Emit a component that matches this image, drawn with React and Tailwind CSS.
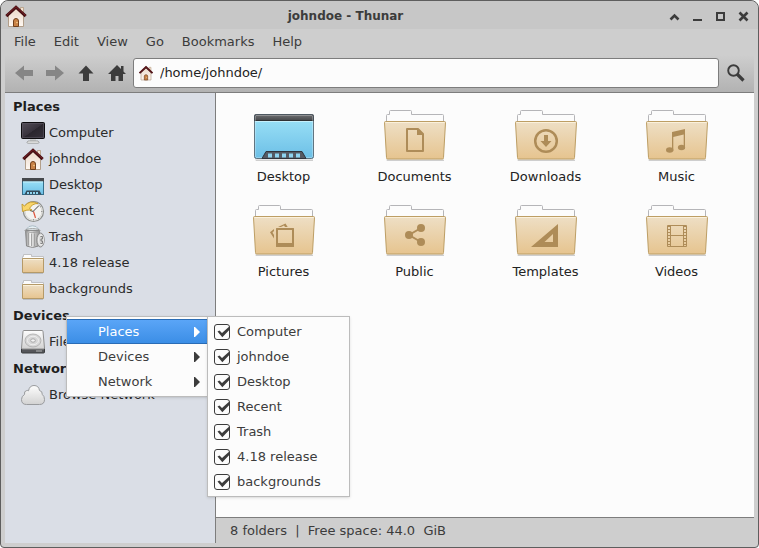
import { useState } from "react";

const MENUS = ["File", "Edit", "View", "Go", "Bookmarks", "Help"];

const PLACES = [
  { name: "Computer", Icon: ComputerIcon },
  { name: "johndoe", Icon: HouseIcon },
  { name: "Desktop", Icon: SmallDesktopIcon },
  { name: "Recent", Icon: RecentIcon },
  { name: "Trash", Icon: TrashIcon },
  { name: "4.18 release", Icon: SmallFolderIcon },
  { name: "backgrounds", Icon: SmallFolderIcon },
];

const SECTIONS = [
  { title: "Places", items: PLACES },
  { title: "Devices", items: [{ name: "File System", Icon: DriveIcon }] },
  { title: "Network", items: [{ name: "Browse Network", Icon: CloudIcon }] },
];

const FOLDERS = [
  "Desktop",
  "Documents",
  "Downloads",
  "Music",
  "Pictures",
  "Public",
  "Templates",
  "Videos",
];

export default function App() {
  return (
    <div className="relative flex min-h-screen flex-col rounded-t-lg rounded-b border border-[#5e5e5e] bg-[#cecece] font-['DejaVu_Sans',sans-serif] text-[13px] leading-4 text-[#3c3c3c]">
      <Gradients />
      <TitleBar />
      <div className="mx-1 mb-1 flex flex-1 flex-col">
        <nav className="flex h-[26px] items-center gap-[18px] px-[9px]">
          {MENUS.map((m) => (
            <button key={m}>{m}</button>
          ))}
        </nav>
        <Toolbar />
        <div className="flex flex-1">
          <Sidebar />
          <main className="flex flex-1 flex-col">
            <FileView />
            <footer className="flex h-[26px] items-center border-t border-[#7d7d7d] px-[14px] whitespace-pre">
              8 folders  |  Free space: 44.0  GiB
            </footer>
          </main>
        </div>
      </div>
      <ContextMenu />
    </div>
  );
}

function TitleBar() {
  return (
    <header className="flex h-7 items-center rounded-t-lg bg-[#c7c7c7] pt-0.5 pr-[3px] pl-[3px]">
      <HouseIcon className="size-6" />
      <h1 className="flex-1 text-center text-[12px] font-bold">johndoe - Thunar</h1>
      <button aria-label="Roll up" className="grid w-[23px] place-items-center">
        <svg viewBox="0 0 11 11" className="size-[11px]">
          <path d="M1.500 8.500 5.500 4.500 9.500 8.500" fill="none" stroke="#3c3c3c" strokeWidth="2.600" />
        </svg>
      </button>
      <button aria-label="Minimize" className="grid w-[23px] place-items-center">
        <svg viewBox="0 0 11 11" className="size-[11px]">
          <path d="M1 8h9v2H1z" fill="#3c3c3c" />
        </svg>
      </button>
      <button aria-label="Maximize" className="grid w-[23px] place-items-center">
        <svg viewBox="0 0 11 11" className="size-[11px]">
          <path d="M2 2h7v7H2z" fill="none" stroke="#3c3c3c" strokeWidth="2" />
        </svg>
      </button>
      <button aria-label="Close" className="grid w-[23px] place-items-center">
        <svg viewBox="0 0 11 11" className="size-[11px]">
          <path d="M1.500 1.500 9.500 9.500M9.500 1.500 1.500 9.500" stroke="#3c3c3c" strokeWidth="2.600" />
        </svg>
      </button>
    </header>
  );
}

function Toolbar() {
  const [path, setPath] = useState("/home/johndoe/");

  return (
    <div className="flex h-[38px] items-center border-b border-[#7d7d7d] bg-linear-to-b from-[#cecece] to-[#b2b2b2] px-[3px] pb-0.5">
      <ToolButton label="Back" color="#868686">
        <path d="M0 9 9 1.500V6h9v6H9v4.500z" />
      </ToolButton>
      <ToolButton label="Forward" color="#868686">
        <path d="M18 9 9 1.500V6H0v6h9v4.500z" />
      </ToolButton>
      <ToolButton label="Up" color="#3c3c3c">
        <path d="M9 1.500 1.500 9.500H6V17h6V9.500h4.500z" />
      </ToolButton>
      <ToolButton label="Home" color="#3c3c3c">
        <path d="M9 1 0 10h3v7h4.500v-5h3v5H15v-7h3l-2.500-2.500V2H13v3z" />
      </ToolButton>
      <label className="mx-px flex h-[30px] flex-1 items-center gap-1.5 rounded-[3px] border border-[#7d7d7d] bg-[#fcfcfc] pl-1">
        <HouseIcon className="size-4" />
        <input
          aria-label="Location"
          value={path}
          onChange={(e) => setPath(e.target.value)}
          className="min-w-0 flex-1 bg-transparent text-[#232323] outline-none"
        />
      </label>
      <ToolButton label="Search" color="#3c3c3c">
        <circle cx="6.500" cy="6.500" r="5.300" fill="none" stroke="#3c3c3c" strokeWidth="1.900" />
        <path d="M10 10 16.500 16.500" stroke="#3c3c3c" strokeWidth="3.200" />
      </ToolButton>
    </div>
  );
}

function ToolButton({ label, color, children }) {
  return (
    <button aria-label={label} className="grid h-[30px] w-[31px] place-items-center">
      <svg viewBox="0 0 18 18" fill={color} className="size-[18px]">
        {children}
      </svg>
    </button>
  );
}

function Sidebar() {
  return (
    <aside className="flex w-[211px] flex-col gap-px border-r border-[#7d7d7d] bg-[#dadee6] pt-px text-[#2b2b2b]">
      {SECTIONS.map((s) => (
        <section key={s.title}>
          <h2 className="flex h-[26px] items-center pl-2 font-bold text-[#1e1e1e]">
            {s.title}
          </h2>
          <ul>
            {s.items.map(({ name, Icon }) => (
              <li key={name}>
                <button className="flex h-[26px] w-full items-center gap-1 pl-4">
                  <Icon className="size-6" />
                  {name}
                </button>
              </li>
            ))}
          </ul>
        </section>
      ))}
    </aside>
  );
}

function FileView() {
  return (
    <div className="grid flex-1 grid-cols-[repeat(auto-fill,131px)] content-start gap-y-[14px] bg-[#fcfcfc] pt-[11px] pl-[2px] text-[#232323]">
      {FOLDERS.map((name) => (
        <button key={name} className="flex flex-col items-center gap-px">
          {name === "Desktop" ? <DesktopIcon /> : <FolderIcon name={name} />}
          <span>{name}</span>
        </button>
      ))}
    </div>
  );
}

function ContextMenu() {
  const [active, setActive] = useState("Places");
  const [hidden, setHidden] = useState([]);
  const items = SECTIONS.find((s) => s.title === active).items;

  const toggle = (name) =>
    setHidden((h) => (h.includes(name) ? h.filter((n) => n !== name) : [...h, name]));

  return (
    <div className="absolute top-[315px] left-[65px] flex items-start">
      <div className="w-[142px] border border-[#bcbcbc] bg-[#fcfcfc] py-0.5 shadow-sm">
        {SECTIONS.map((s) => (
          <button
            key={s.title}
            onClick={() => setActive(s.title)}
            className={`flex h-[25px] w-full items-center justify-between border-y pr-[7px] pl-[31px] ${
              s.title === active
                ? "border-[#2a6cb5] bg-linear-to-b from-[#5aa5f7] to-[#3b8ee6] text-white"
                : "border-transparent"
            }`}
          >
            {s.title}
            <svg viewBox="0 0 6 10" className="h-2.5 w-1.5" fill="currentColor">
              <path d="M0 0H1L6 5 1 10H0z" />
            </svg>
          </button>
        ))}
      </div>
      <div className="-ml-px w-[143px] border border-[#bcbcbc] bg-[#fcfcfc] py-0.5 shadow-sm">
        {items.map(({ name }) => (
          <label key={name} className="flex h-[25px] items-center gap-[7px] pl-[6px]">
            <span className="grid size-4">
              <input
                type="checkbox"
                checked={!hidden.includes(name)}
                onChange={() => toggle(name)}
                className="peer col-start-1 row-start-1 size-4 appearance-none rounded-[3px] border border-[#3c3c3c] bg-[#fcfcfc]"
              />
              <svg
                viewBox="0 0 16 16"
                className="pointer-events-none invisible col-start-1 row-start-1 size-4 peer-checked:visible"
              >
                <path d="M3.500 7.500 5.500 6.500 8 9 15.300 2.500V6L8.300 13.200z" fill="#3c3c3c" />
              </svg>
            </span>
            {name}
          </label>
        ))}
      </div>
    </div>
  );
}

// Shared paint servers for the icons below
function Gradients() {
  return (
    <svg className="absolute size-0" aria-hidden="true">
      <defs>
        <linearGradient id="tan" x2="0" y2="1">
          <stop offset="0" stopColor="#eedfc5" />
          <stop offset="1" stopColor="#e6c48f" />
        </linearGradient>
        <linearGradient id="sky" x2="0" y2="1">
          <stop offset="0" stopColor="#9ee3f8" />
          <stop offset="1" stopColor="#6cbfe6" />
        </linearGradient>
        <linearGradient id="slate" x2="0" y2="1">
          <stop offset="0" stopColor="#737477" />
          <stop offset="1" stopColor="#434447" />
        </linearGradient>
        <linearGradient id="wall" x2="0" y2="1">
          <stop offset="0" stopColor="#ead8c8" />
          <stop offset="1" stopColor="#fff8f2" />
        </linearGradient>
        <linearGradient id="silver" x2="0" y2="1">
          <stop offset="0" stopColor="#fdfdfd" />
          <stop offset="1" stopColor="#d2d2d2" />
        </linearGradient>
        <linearGradient id="metal">
          <stop offset="0" stopColor="#8e8e8e" />
          <stop offset="0.350" stopColor="#f2f2f2" />
          <stop offset="0.650" stopColor="#c4c4c4" />
          <stop offset="1" stopColor="#959595" />
        </linearGradient>
        <linearGradient id="screen" x2="1" y2="1">
          <stop offset="0" stopColor="#55505a" />
          <stop offset="0.500" stopColor="#38333d" />
          <stop offset="0.520" stopColor="#2a262e" />
          <stop offset="1" stopColor="#37323b" />
        </linearGradient>
      </defs>
    </svg>
  );
}

function FolderIcon({ name }) {
  return (
    <svg viewBox="0 0 64 64" className="size-16">
      <path d="M3 55.500h58v1.500H4z" fill="#000" opacity="0.180" />
      <path
        d="M3.500 18V11.500q0-1 1-1h2V7.500q0-1 1-1h20q1 0 1 1v3H59.500q1 0 1 1V18z"
        fill="#fcfcfc"
        stroke="#b5b5b8"
      />
      <path
        d="M2.500 17.500h59q1 0 1 1L60.500 53.500q0 1.500-1 1.500H4.500q-1 0-1-1.500L1.500 18.500q0-1 1-1z"
        fill="url(#tan)"
        stroke="#bd9e64"
      />
      <path d="M2.500 18.500h59" stroke="#fff6e2" opacity="0.800" />
      <Emblem name={name} />
    </svg>
  );
}

function Emblem({ name }) {
  const c = "#ae8c58";
  switch (name) {
    case "Documents":
      return (
        <g>
          <path d="M24 25H35L40 30V47H24z" fill="none" stroke={c} strokeWidth="2" strokeLinejoin="round" />
          <path d="M34 24.500 40.500 31H34z" fill={c} />
        </g>
      );
    case "Downloads":
      return (
        <g>
          <circle cx="32" cy="37" r="10.800" fill="none" stroke={c} strokeWidth="2.500" />
          <path d="M30 31h4v6h3.500L32 43l-5.500-6H30z" fill={c} />
        </g>
      );
    case "Music":
      return (
        <g fill={c}>
          <path d="M27 28 40 25V45H38.700V30.500L28.300 33V47H27z" />
          <ellipse cx="24.700" cy="46" rx="3.700" ry="2.800" />
          <ellipse cx="36.500" cy="43.500" rx="3.600" ry="2.800" />
        </g>
      );
    case "Pictures":
      return (
        <g fill={c}>
          <path
            fillRule="evenodd"
            d="M24.500 29h17q.500 0 .500.500V47.500q0 .500-.500.500h-17q-.500 0-.500-.500V29.500q0-.500.500-.500zM26 31V44H40V31z"
          />
          <path d="M22 30 18 33.200 22 39.500V36L20.500 33.500 22 32z" />
          <path d="M26 28 33.500 24.500 35.700 28H33L32 26.500 29 28z" />
        </g>
      );
    case "Public":
      return (
        <g fill={c}>
          <path d="M38 29 26 36 38 43" fill="none" stroke={c} strokeWidth="2" />
          <circle cx="38" cy="29" r="4" />
          <circle cx="26" cy="36" r="4" />
          <circle cx="38" cy="43" r="4" />
        </g>
      );
    case "Templates":
      return <path fill={c} fillRule="evenodd" d="M44 25V48H17zM39 35 30.500 43H39z" />;
    case "Videos":
      return (
        <g fill="none" stroke={c}>
          <path d="M22.500 26.500h19v21h-19zM25.500 26.500v21M38.500 26.500v21M25.500 36.500h13" />
          <path d="M24 27v20M40 27v20" strokeWidth="2" strokeDasharray="1 2" />
        </g>
      );
    default:
      return null;
  }
}

function DesktopIcon() {
  return (
    <svg viewBox="0 0 64 64" className="size-16">
      <path d="M3 55.500h58v1.500H4z" fill="#000" opacity="0.180" />
      <rect x="2.500" y="10.500" width="59" height="44" rx="1.500" fill="url(#sky)" />
      <path d="M2 17V12q0-2 2-2H60q2 0 2 2V17z" fill="url(#slate)" />
      <path d="M3.500 17.500h57" stroke="#c5f0fc" />
      <path d="M2.500 16.500h59" stroke="#303134" />
      <rect x="3.500" y="11.500" width="57" height="42" rx="1" fill="none" stroke="#fff" opacity="0.250" />
      <rect x="2.500" y="10.500" width="59" height="44" rx="2" fill="none" stroke="#414f59" opacity="0.750" />
      <path d="M10 54.500 14 47.500H50L54 54.500z" fill="#555a63" stroke="#2f343c" />
      <path d="M16 49.500h4v4h-4zM23 49.500h4v4h-4zM30 49.500h4v4h-4zM37 49.500h4v4h-4zM44 49.500h4v4h-4z" fill="#8ed4f0" />
    </svg>
  );
}

function ComputerIcon({ className }) {
  return (
    <svg viewBox="0 0 24 24" className={className}>
      <path d="M9 17h6v3H9z" fill="#c9cbcc" />
      <path d="M7 20h10l1 1.500q0 .700-1 .700H7q-1 0-1-.700z" fill="#f4f4f4" stroke="#8f9290" strokeWidth="0.800" />
      <rect x="0.500" y="1.500" width="23" height="16" rx="1" fill="url(#screen)" stroke="#0d0c0f" />
      <path d="M1.500 2.500h21v14h-21z" fill="none" stroke="#5d5863" strokeWidth="0.600" />
    </svg>
  );
}

function HouseIcon({ className }) {
  return (
    <svg viewBox="0 0 24 24" className={className}>
      <path d="M16.500 3.500h3V11h-3z" fill="#f4e2d0" stroke="#b49a80" strokeWidth="0.800" />
      <path d="M4.500 11 12 4 19.500 11V22.500h-15z" fill="url(#wall)" stroke="#ab9680" strokeWidth="0.900" />
      <path d="M9.500 22.500V17q0-2.500 2.500-2.500t2.500 2.500v5.500z" fill="#c98246" stroke="#70401c" />
      <circle cx="13" cy="18.500" r="0.700" fill="#ffe2a0" />
      <path d="M2.300 12.200 12 3.200 21.700 12.200" fill="none" stroke="#430f12" strokeWidth="3" />
      <path d="M2.300 11.700 12 2.700 21.700 11.700" fill="none" stroke="#802128" strokeWidth="0.900" />
    </svg>
  );
}

function SmallDesktopIcon({ className }) {
  return (
    <svg viewBox="0 0 24 24" className={className}>
      <rect x="1.500" y="6.500" width="21" height="15" fill="url(#sky)" stroke="#366f8b" />
      <path d="M1 5h22v3.500H1z" fill="#45484c" />
      <path d="M2 9h20" stroke="#c5f0fc" />
      <path d="M3.500 21.500 5.500 17.500h13l2 4z" fill="#344b5a" />
      <path d="M6 19h2v2H6zM9 19h2v2H9zM12 19h2v2h-2zM15 19h2v2h-2z" fill="#8ed4f0" />
    </svg>
  );
}

function RecentIcon({ className }) {
  return (
    <svg viewBox="0 0 24 24" className={className}>
      <circle cx="12.500" cy="12.500" r="10" fill="#f3f3f1" stroke="#8d8f8c" strokeWidth="1.200" />
      <circle cx="12.500" cy="12.500" r="8.500" fill="none" stroke="#d5d5d2" />
      <path d="M12.500 20v1.500M20 12.500h1.500M17 19l1 1M19 8l1-.500" stroke="#999" />
      <path d="M12.500 12 18 6.500" stroke="#444" />
      <path d="M12.500 12.500 14.500 19" stroke="#e0563e" strokeWidth="1.200" />
      <path d="M12.500 12.500 9 11.500" stroke="#444" />
      <path
        d="M1 5 3.500 7Q9 .500 17 4.500 11 4.500 8.500 9.500L11 11Q5.500 10.500 1.500 12.500z"
        fill="#f9d56a"
        stroke="#c29a2b"
        strokeWidth="0.900"
        strokeLinejoin="round"
      />
    </svg>
  );
}

function TrashIcon({ className }) {
  return (
    <svg viewBox="0 0 24 24" className={className}>
      <path d="M5.500 4 8 1.500 11.500 .800 15 1.500 17.500 4 17 6H7z" fill="#e6f0f5" stroke="#9db0ba" strokeWidth="0.800" />
      <path d="M4.500 5.500h14L17.500 21q-6 3-12 0z" fill="url(#metal)" stroke="#858585" strokeWidth="0.900" />
      <path d="M7.500 8v12.500M10.500 8.500V21M13.500 8.500V21" stroke="#9c9c9c" strokeWidth="0.900" />
      <ellipse cx="11.500" cy="5.500" rx="7.500" ry="1.800" fill="none" stroke="#9a9a9a" />
      <ellipse cx="19.500" cy="15" rx="3.700" ry="7" fill="#d2d2d2" stroke="#8a8a8a" />
      <ellipse cx="20" cy="15" rx="2.300" ry="5" fill="none" stroke="#f5f5f5" />
      <path d="M19.500 11.500h2v2.500h-1.500v2h1.500v2.500h-2" fill="none" stroke="#777" strokeWidth="0.900" />
    </svg>
  );
}

function SmallFolderIcon({ className }) {
  return (
    <svg viewBox="0 0 24 24" className={className}>
      <path d="M2 22h20v1H2z" fill="#000" opacity="0.150" />
      <path d="M1.500 7V5.500H2.500V3.500H10.500V5.500H22.500V8h-21z" fill="#fcfcfc" stroke="#c0c1c4" />
      <path d="M1.500 7.500h21v14h-21z" fill="url(#tan)" stroke="#b59a68" />
      <path d="M2 8.500h20" stroke="#fff6e2" opacity="0.800" />
    </svg>
  );
}

function DriveIcon({ className }) {
  return (
    <svg viewBox="0 0 24 24" className={className}>
      <path d="M.500 18.500h23V22q0 1-1 1H1.500q-1 0-1-1z" fill="#55565a" stroke="#3b3c3e" />
      <path d="M3 .500h18q1 0 1 1l1.500 16.500q0 1-1 1h-21q-1 0-1-1L2 1.500q0-1 1-1z" fill="url(#silver)" stroke="#8e8e8e" />
      <ellipse cx="12" cy="10.500" rx="8" ry="6.500" fill="#d6d6d6" stroke="#aaa" strokeWidth="0.800" />
      <ellipse cx="12" cy="10.500" rx="5.500" ry="4.300" fill="none" stroke="#f0f0f0" />
      <ellipse cx="12" cy="10.500" rx="2.300" ry="1.700" fill="#f3f3f3" stroke="#999" strokeWidth="0.800" />
      <path d="M15 21h6" stroke="#b6b6b6" />
    </svg>
  );
}

function CloudIcon({ className }) {
  return (
    <svg viewBox="0 0 24 24" className={className}>
      <path
        d="M5.500 21.500Q.500 21.500.500 16.500.500 13 3.500 11.500 2.800 8 5.800 7.500 6.800 7.300 7.500 7.800 8.500 2.500 13 2.500 17.800 2.500 18.500 7.500 21.500 8 21.300 11.500 23.500 13 23.500 16.500 23.500 21.500 18.500 21.500z"
        fill="url(#silver)"
        stroke="#999b9e"
      />
    </svg>
  );
}
